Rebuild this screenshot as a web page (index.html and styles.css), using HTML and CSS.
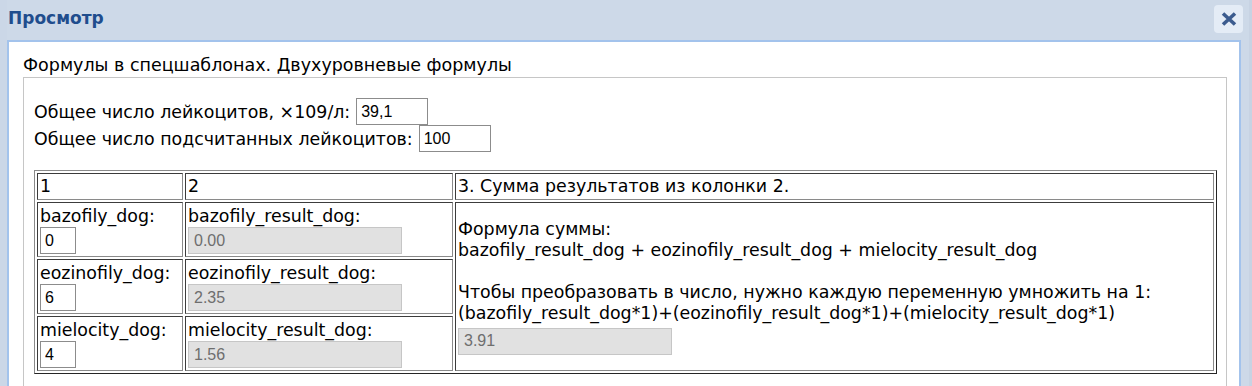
FILE: index.html
```html
<!DOCTYPE html>
<html lang="ru">
<head>
<meta charset="utf-8">
<title>Просмотр</title>
<link rel="stylesheet" href="styles.css">
</head>
<body>
<div class="window">
  <div class="titlebar">
    <span class="title">Просмотр</span>
    <button class="close" type="button" aria-label="Закрыть">
      <svg width="16" height="14" viewBox="0 0 16 14"><path d="M2 1.5 L14 12.5 M14 1.5 L2 12.5" stroke="#3b5b8e" stroke-width="3.6" stroke-linecap="butt"/></svg>
    </button>
  </div>
  <div class="panel">
    <div class="heading">Формулы в спецшаблонах. Двухуровневые формулы</div>
    <div class="box">
      <div class="line"><span>Общее число лейкоцитов, ×109/л:</span><input class="field field-a" type="text" value="39,1"></div>
      <div class="line"><span>Общее число подсчитанных лейкоцитов:</span><input class="field field-a" type="text" value="100"></div>
      <table class="grid">
        <tr class="head">
          <td class="c1">1</td>
          <td class="c2">2</td>
          <td class="c3">3. Сумма результатов из колонки 2.</td>
        </tr>
        <tr>
          <td><div class="lbl">bazofily_dog:</div><input class="field field-s" type="text" value="0"></td>
          <td><div class="lbl">bazofily_result_dog:</div><input class="field field-ro" type="text" value="0.00" readonly></td>
          <td class="sum" rowspan="3">
            <div class="txt">Формула суммы:</div>
            <div class="txt">bazofily_result_dog + eozinofily_result_dog + mielocity_result_dog</div>
            <div class="txt">&nbsp;</div>
            <div class="txt">Чтобы преобразовать в число, нужно каждую переменную умножить на 1:</div>
            <div class="txt">(bazofily_result_dog*1)+(eozinofily_result_dog*1)+(mielocity_result_dog*1)</div>
            <input class="field field-ro field-sum" type="text" value="3.91" readonly>
          </td>
        </tr>
        <tr>
          <td><div class="lbl">eozinofily_dog:</div><input class="field field-s" type="text" value="6"></td>
          <td><div class="lbl">eozinofily_result_dog:</div><input class="field field-ro" type="text" value="2.35" readonly></td>
        </tr>
        <tr>
          <td><div class="lbl">mielocity_dog:</div><input class="field field-s" type="text" value="4"></td>
          <td><div class="lbl">mielocity_result_dog:</div><input class="field field-ro" type="text" value="1.56" readonly></td>
        </tr>
      </table>
    </div>
  </div>
</div>
</body>
</html>
```
FILE: styles.css
```css
html, body {
  margin: 0;
  padding: 0;
  height: 100%;
  overflow: hidden;
}
body {
  background: #cdd9e8;
  font-family: "DejaVu Sans", Verdana, sans-serif;
  color: #000;
}
.window {
  height: 100%;
  display: flex;
  flex-direction: column;
  border-left: 7px solid #cbd7e7;
  border-right: 3px solid #c7d3e3;
  box-sizing: border-box;
}
.titlebar {
  height: 40px;
  flex: none;
  display: flex;
  align-items: flex-start;
  justify-content: space-between;
  padding: 0 6px 0 1px;
}
.title {
  font-weight: bold;
  font-size: 17px;
  line-height: 20px;
  color: #1f4d8d;
  margin-top: 8px;
}
.close {
  margin-top: 5px;
  width: 29px;
  height: 28px;
  border: none;
  border-radius: 4px;
  background: #e4ecf6;
  padding: 0;
  display: flex;
  align-items: center;
  justify-content: center;
}
.panel {
  flex: 1;
  background: #fff;
  border: 2px solid #a3c3ec;
  border-bottom: none;
  margin-right: 8px;
  padding: 0 12px 0 14px;
}
.heading {
  font-size: 17.5px;
  line-height: 22px;
  margin-top: 12px;
  margin-bottom: 1px;
}
.box {
  border: 1px solid #c6c6c6;
  padding: 20px 10px 30px 10px;
  font-size: 17.4px;
}
.line {
  display: flex;
  align-items: center;
  height: 27px;
}
.field {
  box-sizing: border-box;
  height: 27px;
  font-family: "Liberation Sans", Arial, sans-serif;
  font-size: 16px;
  color: #000;
  padding: 0 4px;
  margin: 0;
  border: 1px solid #8c8c8c;
  background: #fff;
  outline: none;
}
.field-a {
  width: 72px;
  margin-left: 6px;
}
.grid {
  margin-top: 18px;
  width: 1183px;
  table-layout: fixed;
  border-collapse: separate;
  border-spacing: 2px;
  border-style: solid;
  border-width: 1px;
  border-color: #8a8a8a #262626 #262626 #8a8a8a;
  font-size: 17.4px;
}
.grid td {
  box-sizing: border-box;
  padding: 2px;
  border-style: solid;
  border-width: 1px;
  border-color: #3c3c3c #8a8a8a #8a8a8a #3c3c3c;
  vertical-align: middle;
  line-height: 22px;
}
.grid .head td {
  line-height: 21px;
}
.c1 { width: 146px; }
.c2 { width: 268px; }
.c3 { width: 759px; }
.lbl {
  white-space: nowrap;
}
.field-s {
  display: block;
  width: 36px;
}
.field-ro {
  display: block;
  width: 214px;
  background: #e1e1e1;
  border-color: #c6c6c6;
  color: #6e6e6e;
  padding-left: 5px;
}
.txt {
  line-height: 21px;
  white-space: nowrap;
}
.field-sum {
  margin-top: 4px;
}
```
